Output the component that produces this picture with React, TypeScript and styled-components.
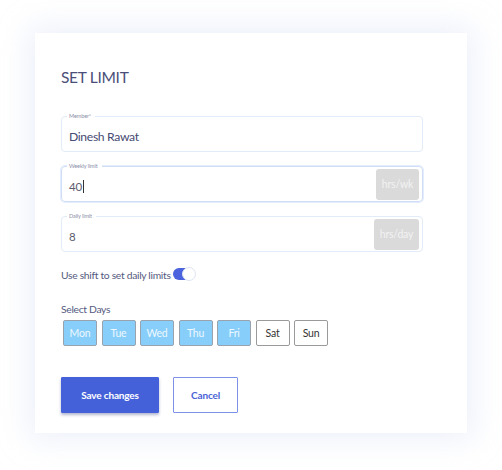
import React from "react";
import styled, { createGlobalStyle } from "styled-components";

const Global = createGlobalStyle`
  html, body { margin: 0; padding: 0; background: #ffffff; }
  body { font-family: Lato, "Open Sans", Arial, sans-serif; }
  * { box-sizing: border-box; }
`;

const Page = styled.div`
  width: 502px;
  height: 470px;
  padding: 33px 0 0 35px;
  background: #fff;
`;

const Card = styled.div`
  width: 432px;
  height: 400px;
  background: #fff;
  box-shadow: 0 0 28px 6px rgba(200, 212, 240, 0.35);
  padding: 34px 44px 0 26px;
  display: flex;
  flex-direction: column;
`;

const Title = styled.h1`
  margin: 0;
  font-size: 15.5px;
  font-weight: 400;
  line-height: 20px;
  color: #4a4e78;
  letter-spacing: -0.3px;
`;

const Fields = styled.div`
  margin-top: 29px;
  display: flex;
  flex-direction: column;
  gap: 14px;
`;

const Field = styled.div<{ $focus?: boolean }>`
  padding: 0 3px 0 7px;
  height: 36px;
  border: 1px solid ${(p) => (p.$focus ? "#cfddf6" : "#e2ebf8")};
  border-radius: 4px;
  display: flex;
  align-items: center;
  position: relative;
  box-shadow: ${(p) => (p.$focus ? "0 0 0 1px #e4edfb" : "none")};
`;

const Legend = styled.span`
  font-size: 5.5px;
  color: #8a8ea8;
  padding: 0 4px 0 2px;
  line-height: 6px;
  position: absolute;
  top: -4px;
  left: 5px;
  background: #fff;
  letter-spacing: -0.1px;
`;

const Value = styled.span<{ $name?: boolean }>`
  flex: 1;
  font-size: ${(p) => (p.$name ? "12.2px" : "11.5px")};
  letter-spacing: ${(p) => (p.$name ? "-0.35px" : "-0.2px")};
  color: ${(p) => (p.$name ? "#474b72" : "#5a5c6e")};
  padding-top: ${(p) => (p.$name ? "4px" : "4px")};
  display: flex;
  align-items: center;
`;

const Caret = styled.span`
  display: inline-block;
  width: 1px;
  height: 13px;
  background: #333;
  margin-left: 1px;
`;

const Unit = styled.span<{ $w: number }>`
  width: ${(p) => p.$w}px;
  height: 31px;
  background: #dadada;
  color: #f2f2f2;
  font-size: 10.5px;
  letter-spacing: -0.2px;
  border-radius: 3px;
  display: flex;
  align-items: center;
  justify-content: center;
`;

const ToggleRow = styled.div`
  margin-top: 15px;
  display: flex;
  align-items: center;
  gap: 2px;
  font-size: 10.3px;
  letter-spacing: -0.3px;
  color: #555a80;
  height: 16px;
`;

const Toggle = styled.span`
  width: 21px;
  height: 12px;
  border-radius: 6px;
  background: #4b63dc;
  position: relative;
  margin-top: -3px;
`;

const Knob = styled.span`
  position: absolute;
  right: -2px;
  top: -1px;
  width: 14px;
  height: 14px;
  border-radius: 50%;
  background: #fff;
  border: 1px solid #dfe4f2;
`;

const DaysLabel = styled.div`
  margin-top: 20px;
  font-size: 10.3px;
  letter-spacing: -0.3px;
  color: #555a80;
`;

const Days = styled.div`
  margin-top: 5px;
  margin-left: 2px;
  display: flex;
  gap: 4.5px;
`;

const Day = styled.span<{ $on?: boolean }>`
  width: 34px;
  height: 26px;
  border: 1px solid ${(p) => (p.$on ? "#9aa3ad" : "#9a9a9a")};
  border-radius: 2px;
  background: ${(p) => (p.$on ? "#87cefa" : "#fff")};
  color: ${(p) => (p.$on ? "#eef8ff" : "#333")};
  font-size: 10.5px;
  letter-spacing: -0.2px;
  display: flex;
  align-items: center;
  justify-content: center;
`;

const Actions = styled.div`
  margin-top: 31px;
  display: flex;
  gap: 14px;
`;

const Button = styled.button<{ $primary?: boolean }>`
  height: 36px;
  padding: 0;
  width: ${(p) => (p.$primary ? "98px" : "65px")};
  font-family: Lato, Arial, sans-serif;
  font-weight: 700;
  font-size: 10px;
  letter-spacing: -0.15px;
  border-radius: 1px;
  border: 1px solid ${(p) => (p.$primary ? "#4561d9" : "#7d90e8")};
  background: ${(p) => (p.$primary ? "#4561d9" : "#fff")};
  color: ${(p) => (p.$primary ? "#fff" : "#4b63d6")};
  box-shadow: ${(p) => (p.$primary ? "0 2px 3px rgba(40, 50, 120, 0.35)" : "none")};
`;

const days = [
  { d: "Mon", on: true },
  { d: "Tue", on: true },
  { d: "Wed", on: true },
  { d: "Thu", on: true },
  { d: "Fri", on: true },
  { d: "Sat", on: false },
  { d: "Sun", on: false },
];

export default function App() {
  return (
    <>
      <Global />
      <Page>
        <Card>
          <Title>SET LIMIT</Title>
          <Fields>
            <Field>
              <Legend>Member*</Legend>
              <Value $name>Dinesh Rawat</Value>
            </Field>
            <Field $focus>
              <Legend>Weekly limit</Legend>
              <Value>
                40<Caret />
              </Value>
              <Unit $w={43}>hrs/wk</Unit>
            </Field>
            <Field>
              <Legend>Daily limit</Legend>
              <Value>8</Value>
              <Unit $w={45}>hrs/day</Unit>
            </Field>
          </Fields>
          <ToggleRow>
            Use shift to set daily limits
            <Toggle>
              <Knob />
            </Toggle>
          </ToggleRow>
          <DaysLabel>Select Days</DaysLabel>
          <Days>
            {days.map((x) => (
              <Day key={x.d} $on={x.on}>
                {x.d}
              </Day>
            ))}
          </Days>
          <Actions>
            <Button $primary>Save changes</Button>
            <Button>Cancel</Button>
          </Actions>
        </Card>
      </Page>
    </>
  );
}
